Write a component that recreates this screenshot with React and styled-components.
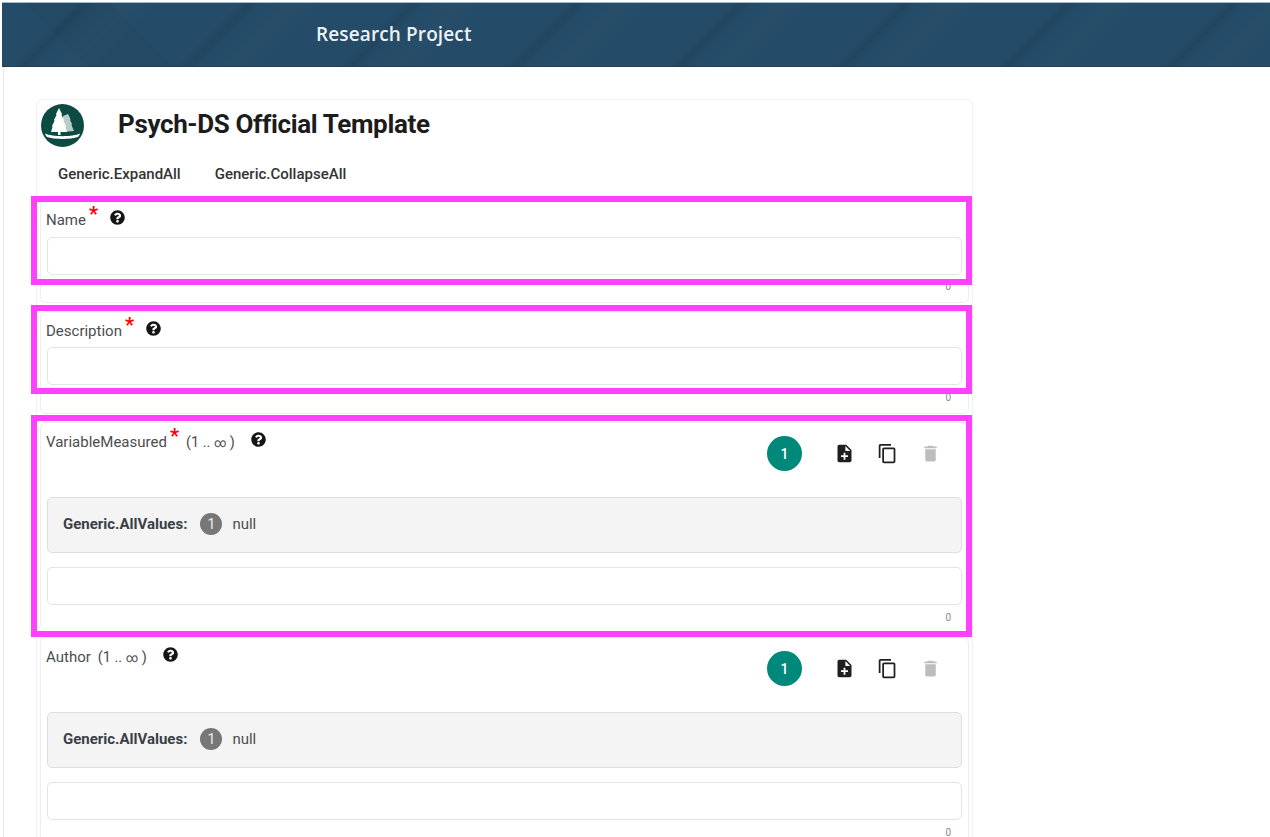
import styled, { createGlobalStyle } from "styled-components";
import { FaQuestionCircle } from "react-icons/fa";
import { MdNoteAdd, MdContentCopy, MdDelete } from "react-icons/md";

const GlobalStyle = createGlobalStyle`
  html, body {
    margin: 0;
    height: 837px;
    overflow: hidden;
    background: #fff;
    font-family: "Roboto", "Liberation Sans", sans-serif;
  }
`;

const Header = styled.header`
  box-sizing: border-box;
  height: 65px;
  margin-left: 2px;
  margin-top: 2px;
  padding: 0 0 2px 314px;
  border-top: 1px solid #9fbbd0;
  border-bottom: 1px solid #1f4059;
  display: flex;
  align-items: center;
  background-color: #244b67;
  background-image:
    repeating-linear-gradient(135deg, transparent 0 52px, rgba(0, 0, 0, 0.07) 60px, transparent 68px, rgba(255, 255, 255, 0.015) 92px, transparent 116px),
    linear-gradient(45deg, transparent 0 60px, rgba(0, 0, 0, 0.03) 61px 120px, transparent 121px);
`;

const ProjectName = styled.span`
  font-family: "Open Sans", sans-serif;
  font-size: 19px;
  font-weight: 600;
  letter-spacing: 0.12px;
  color: #eef2f5;
`;

const Main = styled.main`
  margin-left: 3px;
  padding: 32px 0 0 32px;
  border-left: 1px solid #e8e8e8;
  min-height: 770px;
`;

const Card = styled.section`
  width: 935px;
  border: 1px solid #f1f1f1;
  border-radius: 6px;
`;

const CardHead = styled.div`
  display: flex;
  align-items: center;
  gap: 34px;
  padding: 4px 4px 0;
`;

const Title = styled.h1`
  margin: 0 0 4px;
  font-size: 26px;
  font-weight: 700;
  letter-spacing: -0.36px;
  color: #1c1c1c;
`;

const Toolbar = styled.div`
  display: flex;
  gap: 34px;
  margin-top: 17px;
  padding: 0 0 16px 21px;
`;

const TextButton = styled.button`
  padding: 0;
  border: 0;
  background: none;
  font: 500 15px/20px "Roboto", sans-serif;
  color: #333;
`;

const Fields = styled.div`
  display: flex;
  flex-direction: column;
  gap: 8px;
  padding: 0 3px;
`;

const FieldCard = styled.div`
  position: relative;
  padding: 9px 6px ${(p) => (p.$list ? "4px" : "9px")};
  border: 1px solid #eee;
  border-bottom-color: ${(p) => (p.$list ? "transparent" : "#eee")};
  border-radius: 6px;
`;

const Highlight = styled.div`
  position: absolute;
  top: ${(p) => p.$top}px;
  left: -10px;
  right: -4px;
  height: ${(p) => p.$height}px;
  box-sizing: border-box;
  border: 6px solid #ff40ff;
  pointer-events: none;
`;

const FieldHead = styled.div`
  display: flex;
  justify-content: space-between;
  align-items: flex-start;
  height: ${(p) => p.$height}px;
`;

const LabelRow = styled.div`
  display: flex;
  align-items: center;
  height: 20px;
  font-size: 15px;
  color: #4d4d4d;
  margin-left: -1px;
`;

const Star = styled.span`
  align-self: flex-start;
  margin: -6px 0 0 3px;
  font-size: 20px;
  line-height: 20px;
  font-weight: 700;
  color: #f00;
`;

const Cardinality = styled.span`
  margin-left: 7px;
  font-size: 14.5px;
  white-space: pre;
`;

const Infinity = styled.span`
  font-size: 12px;
`;

const HelpIcon = styled(FaQuestionCircle)`
  margin: 0 0 6px ${(p) => p.$gap}px;
  font-size: 15px;
  color: #151515;
`;

const Actions = styled.div`
  display: flex;
  align-items: center;
  margin: 4px 10px 0 0;
`;

const CountBadge = styled.span`
  display: flex;
  align-items: center;
  justify-content: center;
  width: 35px;
  height: 35px;
  margin-right: 21px;
  border-radius: 50%;
  background: #00897b;
  color: #fff;
  font-size: 14px;
  font-weight: 500;
`;

const IconButton = styled.button`
  display: flex;
  align-items: center;
  justify-content: center;
  width: 43px;
  height: 35px;
  padding: 0;
  border: 0;
  background: none;
  font-size: 21px;
  color: ${(p) => (p.$disabled ? "#bdbdbd" : "#1f1f1f")};
`;

const ValuesBox = styled.div`
  display: flex;
  align-items: center;
  box-sizing: border-box;
  height: 56px;
  margin-bottom: 14px;
  padding: 0 0 2px 15px;
  border: 1.5px solid #dedede;
  border-radius: 5px;
  background: #f4f4f4;
  font-size: 15px;
  color: #4d4d4d;
`;

const ValuesLabel = styled.strong`
  margin-right: 13px;
  font-weight: 700;
  color: #3a3f45;
`;

const ValueBadge = styled.span`
  display: flex;
  align-items: center;
  justify-content: center;
  width: 22px;
  height: 22px;
  margin-right: 10px;
  border-radius: 50%;
  background: #777;
  color: #eee;
  font-size: 14px;
`;

const TextInput = styled.input`
  display: block;
  box-sizing: border-box;
  width: 100%;
  height: 38px;
  border: 1.5px solid #e4e4e4;
  border-radius: 5px;
  background: #fff;
  outline: none;
`;

const CharCount = styled.div`
  margin-top: ${(p) => p.$gap}px;
  padding-right: 11px;
  text-align: right;
  font-size: 10px;
  line-height: 12px;
  color: #888;
`;

const Logo = () => (
  <svg width="43" height="43" viewBox="0 0 43 43">
    <circle cx="21.5" cy="21.5" r="21.5" fill="#0d4a42" />
    <polygon fill="#b9cdc8" points="27,10 29.5,15 29,16 31,20 30.5,21 33,27 22,28 22,12" />
    <g fill="#fff">
      <polygon points="18,4 21,10 20.5,11 23,16 22.5,17 25,22 24.5,23 26,28 19.5,28 19.5,31 17,31 17,28 10,28 11.5,23 11,22 13.5,17 13,16 15.5,11 15,10" />
      <path d="M4 29.5 C11 33 32 33 39 29.5 C38.5 31 38 32 37 33 C30 35.5 13 35.5 6 33 C5 32 4.5 31 4 29.5 Z" />
    </g>
  </svg>
);

const ListActions = () => (
  <Actions>
    <CountBadge>1</CountBadge>
    <IconButton><MdNoteAdd /></IconButton>
    <IconButton><MdContentCopy /></IconButton>
    <IconButton $disabled><MdDelete /></IconButton>
  </Actions>
);

const SimpleField = ({ label, headHeight, countGap, mark }) => (
  <FieldCard>
    <FieldHead $height={headHeight}>
      <LabelRow>
        {label}
        <Star>*</Star>
        <HelpIcon $gap={12} />
      </LabelRow>
    </FieldHead>
    <TextInput />
    <CharCount $gap={countGap}>0</CharCount>
    <Highlight $top={mark.top} $height={mark.height} />
  </FieldCard>
);

const ListField = ({ label, required, mark }) => (
  <FieldCard $list>
    <FieldHead $height={65}>
      <LabelRow>
        {label}
        {required && <Star>*</Star>}
        <Cardinality>(1 .. <Infinity>∞</Infinity> )</Cardinality>
        <HelpIcon $gap={16} />
      </LabelRow>
      <ListActions />
    </FieldHead>
    <ValuesBox>
      <ValuesLabel>Generic.AllValues:</ValuesLabel>
      <ValueBadge>1</ValueBadge>
      null
    </ValuesBox>
    <TextInput />
    <CharCount $gap={7}>0</CharCount>
    {mark && <Highlight $top={mark.top} $height={mark.height} />}
  </FieldCard>
);

function App() {
  return (
    <>
      <GlobalStyle />
      <Header>
        <ProjectName>Research Project</ProjectName>
      </Header>
      <Main>
        <Card>
          <CardHead>
            <Logo />
            <Title>Psych-DS Official Template</Title>
          </CardHead>
          <Toolbar>
            <TextButton>Generic.ExpandAll</TextButton>
            <TextButton>Generic.CollapseAll</TextButton>
          </Toolbar>
          <Fields>
            <SimpleField label="Name" headHeight={27} countGap={6} mark={{ top: -5, height: 89 }} />
            <SimpleField label="Description" headHeight={26} countGap={7} mark={{ top: -7, height: 89 }} />
            <ListField label="VariableMeasured" required mark={{ top: -8, height: 222 }} />
            <ListField label="Author" />
          </Fields>
        </Card>
      </Main>
    </>
  );
}

export default App;
